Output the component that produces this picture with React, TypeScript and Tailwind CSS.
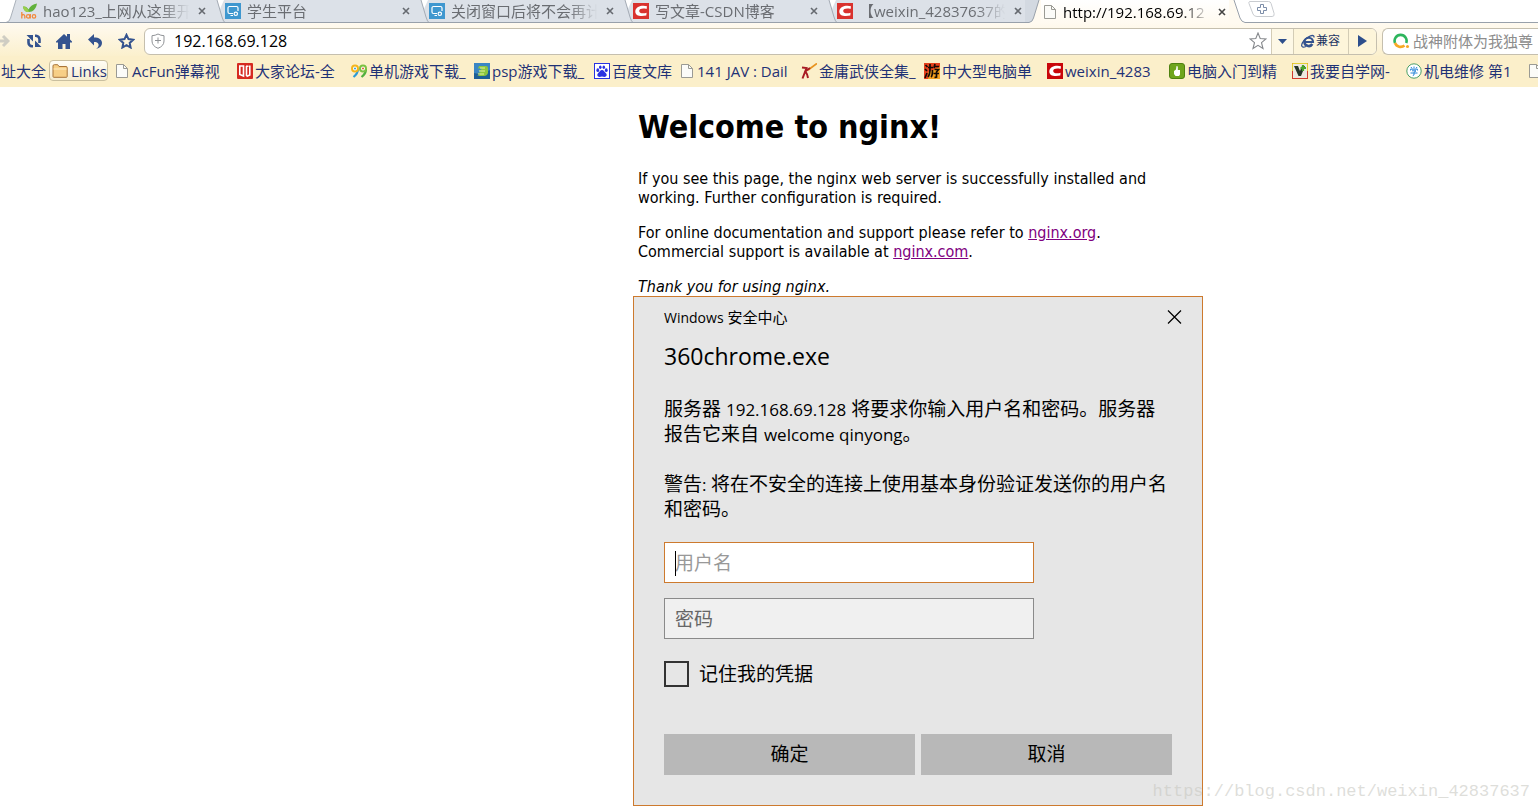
import type { ReactNode } from "react";

function PageIcon() {
  return (
    <svg width="12" height="14" viewBox="0 0 12 14" className="shrink-0">
      <path d="M.5.5h7l4 4v9H.5z" fill="#fbfbf8" stroke="#9a9a94" />
      <path d="M7.500.5v4h4" fill="none" stroke="#9a9a94" />
    </svg>
  );
}

function HaoIcon() {
  return (
    <svg width="16" height="16" viewBox="0 0 16 16" className="shrink-0">
      <path d="M2 3.500c3-.5 4.500 1 5.500 3C9 3 12 1 16 .5c-1 5.500-4 8.500-8 8.500S2.500 7 2 3.500z" fill="#62b23c" />
      <path d="M2 3.500c3 0 5 2 6 5.500-4 0-5.500-2-6-5.500z" fill="#9bcf4a" />
      <g fill="none" stroke="#f28a3c" strokeWidth="1.300">
        <path d="M.8 9v6.500M.8 13c.6-2.200 3-1.800 3 .3v2.200" />
        <circle cx="7.200" cy="13.400" r="1.700" />
        <path d="M9.300 11v4.600" />
        <circle cx="13" cy="13.400" r="1.700" />
      </g>
    </svg>
  );
}

function ScreenIcon() {
  return (
    <svg width="16" height="16" viewBox="0 0 16 16" className="shrink-0">
      <rect width="16" height="16" fill="#3f97cf" />
      <path d="M8 10.500H4.500a1.500 1.500 0 0 1-1.500-1.500V5a1.500 1.500 0 0 1 1.500-1.500h7A1.500 1.500 0 0 1 13 5v3M5.500 12.500h2.500" fill="none" stroke="#fff" strokeWidth="1.200" />
      <circle cx="10.800" cy="10.800" r="1.700" fill="none" stroke="#fff" strokeWidth="1.200" />
    </svg>
  );
}

function CsdnIcon({ color = "#d9322e" }: { color?: string }) {
  return (
    <svg width="16" height="16" viewBox="0 0 16 16" className="shrink-0">
      <rect width="16" height="16" fill={color} />
      <path d="M14 3.200C9.500 1.900 2.800 3 2.300 8c-.4 5 5.300 5.800 11 4.600l.3-2.800c-3 .9-7.600.9-7.400-2 .2-2.600 4.200-2.700 7.400-1.900z" fill="#fff" />
    </svg>
  );
}

type Edge = "first" | "middle" | "active";

function TabEdge({ kind }: { kind: Edge }) {
  return (
    <svg width="16" height="23" viewBox="0 0 16 23" className="shrink-0">
      {kind === "first" && (
        <>
          <path d="M11 0L5.500 18Q4.500 22 1 22.500H16V0z" fill="#dce1e8" />
          <path d="M11 0L5.500 18Q4.500 22 1 22.500" fill="none" stroke="#aab1ba" />
          <path d="M0 22.500h16" stroke="#98a0aa" />
        </>
      )}
      {kind === "middle" && (
        <>
          <rect width="16" height="23" fill="#dce1e8" />
          <path d="M8 0h7l-4 9z" fill="#fff" />
          <path d="M8 0l5 17q1.500 5 3 5.500" fill="none" stroke="#a4abb4" />
          <path d="M0 22.500h16" stroke="#98a0aa" />
        </>
      )}
      {kind === "active" && (
        <>
          <rect width="16" height="23" fill="#d3d9e1" />
          <path d="M14 0L8.500 18Q7.500 22 4 22.500V23h12V0z" fill="#fffaf0" />
          <path d="M14 0L8.500 18Q7.500 22 4 22.500H0" fill="none" stroke="#98a0aa" />
        </>
      )}
    </svg>
  );
}

function Tab({ edge, icon, title }: { edge: Edge; icon: ReactNode; title: string }) {
  const active = edge === "active";
  return (
    <div className="flex h-[23px] w-[204px] shrink-0">
      <TabEdge kind={edge} />
      <div
        className={
          active
            ? "flex grow items-center bg-gradient-to-b from-white to-[#fffaf0]"
            : "flex grow items-center border-b border-[#98a0aa] bg-[#dce1e8]"
        }
      >
        <span className="flex w-[22px] shrink-0">{icon}</span>
        <span
          className={`w-[151px] shrink-0 text-[15px] leading-[22px] whitespace-nowrap [mask-image:linear-gradient(to_right,black_78%,transparent_97%)] ${
            active ? "text-black" : "text-[#6a6d72]"
          }`}
        >
          {title}
        </span>
        <button aria-label="关闭标签页" className="ml-1 flex shrink-0">
          <svg width="8" height="8" viewBox="0 0 8 8">
            <path d="M1 1l6 6M7 1L1 7" stroke={active ? "#444" : "#666a70"} strokeWidth="1.600" />
          </svg>
        </button>
      </div>
    </div>
  );
}

function TabStrip() {
  return (
    <div className="flex h-[23px] overflow-hidden bg-white">
      <div className="w-[5px] shrink-0 border-b border-[#98a0aa]" />
      <Tab edge="first" icon={<HaoIcon />} title="hao123_上网从这里开" />
      <Tab edge="middle" icon={<ScreenIcon />} title="学生平台" />
      <Tab edge="middle" icon={<ScreenIcon />} title="关闭窗口后将不会再计" />
      <Tab edge="middle" icon={<CsdnIcon />} title="写文章-CSDN博客" />
      <Tab edge="middle" icon={<CsdnIcon />} title="【weixin_42837637的" />
      <Tab edge="active" icon={<span className="pl-[3px]"><PageIcon /></span>} title="http://192.168.69.12" />
      <svg width="16" height="23" viewBox="0 0 16 23" className="shrink-0">
        <path d="M0 0h5l6 18q1.500 4 5 4.500v.5H0z" fill="#fffaf0" />
        <path d="M5 0l6 18q1.500 4 5 4.500" fill="none" stroke="#98a0aa" />
      </svg>
      <div className="flex grow items-start border-b border-[#98a0aa] pl-[3px]">
        <button aria-label="新建标签页">
          <svg width="27" height="17" viewBox="0 0 27 17">
            <path d="M1.500 1.500h19q2 0 2.600 2l3 10q.6 3-2 3H9q-3 0-4-2.500L1 3.500q-.4-2 .5-2z" fill="#fff" stroke="#c9ccd0" />
            <path d="M12.500 4.500h3v3h3v3h-3v3h-3v-3h-3v-3h3z" fill="#fff" stroke="#7c8da8" />
          </svg>
        </button>
      </div>
    </div>
  );
}

function Toolbar() {
  return (
    <div className="flex h-[33px] items-center overflow-hidden bg-gradient-to-b from-[#fffaf0] to-[#fbf0cd] pt-[3px]">
      <button aria-label="前进" className="flex w-[26px] shrink-0">
        <svg width="10" height="14" viewBox="0 0 10 14">
          <path d="M0 7h8M3 2l5 5-5 5" fill="none" stroke="#cfcdc3" strokeWidth="3" />
        </svg>
      </button>
      <button aria-label="刷新" className="flex w-[30px] shrink-0">
        <svg width="16" height="14" viewBox="0 0 16 14">
          <path d="M7 12.300H6A3.700 3.700 0 0 1 2.500 8.500V5M9 1.700h1a3.700 3.700 0 0 1 3.500 3.800V9" fill="none" stroke="#34538f" strokeWidth="2.600" />
          <path d="M.5 1H7v6.500zM15.500 13H9V6.500z" fill="#34538f" />
        </svg>
      </button>
      <button aria-label="主页" className="flex w-[32px] shrink-0">
        <svg width="16" height="15" viewBox="0 0 16 15">
          <path d="M8 0l3 2.800V0h3v5.500L16 7.500v1h-2V15H9.500v-5h-3v5H2V8.500H0v-1z" fill="#34538f" />
        </svg>
      </button>
      <button aria-label="后退" className="flex w-[30px] shrink-0">
        <svg width="16" height="15" viewBox="0 0 16 15">
          <path d="M0 5.500L6 0v3.500c5 0 8 2 8 5.500 0 3-2 5-6 6 2-1.500 3-3 2.500-4.800C10 8.500 8.500 8 6 8v3.500z" fill="#34538f" />
        </svg>
      </button>
      <button aria-label="收藏夹" className="flex w-[26px] shrink-0">
        <svg width="17" height="16" viewBox="0 0 17 16">
          <path d="M8.500 1.800l2 4.300 4.700.6-3.500 3.200.9 4.600-4.100-2.300-4.100 2.300.9-4.600L1.800 6.700l4.700-.6z" fill="none" stroke="#34538f" strokeWidth="2" />
        </svg>
      </button>
      <div className="flex h-[27px] min-w-0 grow items-stretch overflow-hidden rounded-md border border-[#c5bfae] bg-white">
        <svg width="14" height="16" viewBox="0 0 14 16" className="ml-[6px] shrink-0 self-center">
          <path d="M7 1q2.500 1.500 6 1.700V8q0 5-6 7.300Q1 13 1 8V2.700Q4.500 2.500 7 1z" fill="none" stroke="#8f9296" />
          <path d="M7 4.500v6M4 7.500h6" stroke="#8f9296" />
        </svg>
        <input
          aria-label="地址"
          defaultValue="192.168.69.128"
          className="min-w-0 grow bg-transparent pl-[9px] text-[16px] leading-[24px] text-black outline-none"
        />
        <button aria-label="收藏此页" className="flex w-[26px] shrink-0 items-center justify-center">
          <svg width="18" height="18" viewBox="0 0 18 18">
            <path d="M9 1l2.200 5.500 5.800.4-4.500 3.800 1.500 5.800-5-3.200-5 3.200 1.500-5.800L1 6.900l5.800-.4z" fill="#fff" stroke="#85888c" strokeWidth="1.100" />
          </svg>
        </button>
        <button aria-label="地址列表" className="flex w-[22px] shrink-0 items-center justify-center border-l border-[#d3ccb5] bg-[#fdf8e6]">
          <svg width="9" height="5" viewBox="0 0 9 5"><path d="M0 0h9L4.500 5z" fill="#2d4f8c" /></svg>
        </button>
        <button className="flex w-[55px] shrink-0 items-center gap-px border-l border-[#d3ccb5] bg-[#fdf5da] pl-[7px] text-[12px] leading-4 text-[#1d3564]">
          <svg width="14" height="14" viewBox="0 0 14 14">
            <path d="M3.500 8A4 4 0 0 1 12 8H4" fill="none" stroke="#34538f" strokeWidth="2.200" />
            <path d="M3.500 7.500a4.200 4.200 0 0 0 7.800 2.500" fill="none" stroke="#34538f" strokeWidth="2.600" />
            <path d="M13 3.500C13.500-.5 6.500 2 3 6.500-.5 11-.2 14.500 5 12.500" fill="none" stroke="#34538f" strokeWidth="1.300" />
          </svg>
          兼容
        </button>
        <button aria-label="转到" className="flex w-[28px] shrink-0 items-center justify-center border-l border-[#d3ccb5] bg-[#fdf5da]">
          <svg width="9" height="12" viewBox="0 0 9 12"><path d="M0 0l9 6-9 6z" fill="#2d4f8c" /></svg>
        </button>
      </div>
      <div className="ml-[5px] flex h-[27px] w-[156px] shrink-0 items-center overflow-hidden rounded-l-md border border-r-0 border-[#c5bfae] bg-white pl-[10px]">
        <svg width="17" height="16" viewBox="0 0 17 16" className="shrink-0">
          <path d="M2 10A6 6 0 1 1 13.200 10" fill="none" stroke="#2db55d" strokeWidth="2.600" />
          <path d="M2 10a6 6 0 0 0 9.500 2.400" fill="none" stroke="#f7a823" strokeWidth="2.600" />
          <circle cx="14.500" cy="13.500" r="1.500" fill="#f7a823" />
        </svg>
        <input
          aria-label="搜索"
          placeholder="战神附体为我独尊"
          className="ml-[3px] w-[124px] shrink-0 bg-transparent text-[15px] leading-5 outline-none placeholder:text-[#8d8d8d]"
        />
      </div>
    </div>
  );
}

function Favicon({ children }: { children: ReactNode }) {
  return (
    <svg width="16" height="16" viewBox="0 0 16 16" className="shrink-0">
      {children}
    </svg>
  );
}

const bookmarks: { label: string; width: string; icon: ReactNode }[] = [
  { label: "AcFun弹幕视", width: "w-[121px]", icon: <span className="w-[14px] shrink-0"><PageIcon /></span> },
  {
    label: "大家论坛-全",
    width: "w-[114px]",
    icon: (
      <Favicon>
        <rect width="16" height="16" rx="1" fill="#d62a20" />
        <path d="M2.800 3h3.700v10l-3.700-1.500z" fill="none" stroke="#fff" strokeWidth="1.600" />
        <path d="M9.500 13V3M9 3.300h2.500M12.800 2.500v9.500L9.500 13.500" fill="none" stroke="#fff" strokeWidth="1.600" />
      </Favicon>
    ),
  },
  {
    label: "单机游戏下载_",
    width: "w-[123px]",
    icon: (
      <Favicon>
        <path d="M7 6c0 4-2 6-4.500 8" fill="none" stroke="#2a9bd8" strokeWidth="2.200" />
        <circle cx="4" cy="5.500" r="3" fill="#fff" stroke="#f3b51d" strokeWidth="2" />
        <path d="M15 6c0 4-2 6-4.500 8" fill="none" stroke="#4faf3d" strokeWidth="2.200" />
        <circle cx="12" cy="5.500" r="3" fill="#fff" stroke="#7cc142" strokeWidth="2" />
        <circle cx="4" cy="5.500" r="1" fill="#2a9bd8" />
        <circle cx="12" cy="5.500" r="1" fill="#e05a2a" />
      </Favicon>
    ),
  },
  {
    label: "psp游戏下载_",
    width: "w-[120px]",
    icon: (
      <Favicon>
        <rect width="16" height="16" fill="#3a86c4" />
        <path d="M0 10q8 2 16-3v9H0z" fill="#1d5f96" />
        <path d="M5 3h7q2 0 2 2v5q-1 3-4 3H3q3-1 3-2.500H3q3-1 4-2.500H4q3-1 4-2.500H4z" fill="#8cc63f" />
        <path d="M6 5h5M5 8h6M4 11h6" stroke="#e5f3a0" />
      </Favicon>
    ),
  },
  {
    label: "百度文库",
    width: "w-[87px]",
    icon: (
      <Favicon>
        <rect x=".5" y=".5" width="15" height="15" fill="#fff" stroke="#2932e1" />
        <g fill="#2932e1">
          <ellipse cx="3.800" cy="7.200" rx="1.400" ry="1.900" />
          <ellipse cx="6.300" cy="4.200" rx="1.300" ry="1.800" />
          <ellipse cx="9.800" cy="4.200" rx="1.300" ry="1.800" />
          <ellipse cx="12.300" cy="7.200" rx="1.400" ry="1.900" />
          <path d="M8 7c1.800 0 2.500 2 4 3.300 1.500 1.700.3 3.700-1.500 3.700-1 0-1.500-.4-2.500-.4s-1.500.4-2.500.4C3.700 14 2.500 12 4 10.300 5.500 9 6.200 7 8 7z" />
        </g>
      </Favicon>
    ),
  },
  { label: "141 JAV : Dail", width: "w-[120px]", icon: <span className="w-[14px] shrink-0"><PageIcon /></span> },
  {
    label: "金庸武侠全集_",
    width: "w-[123px]",
    icon: (
      <Favicon>
        <path d="M16 .5L7 7" stroke="#e8921f" strokeWidth="1.800" />
        <path d="M1 4.500l4.500.5L1.500 15.500M3.500 9L9 5M4.500 8.500C6 10.500 6.500 12 7 15" fill="none" stroke="#a81c24" strokeWidth="2" />
      </Favicon>
    ),
  },
  {
    label: "中大型电脑单",
    width: "w-[123px]",
    icon: (
      <Favicon>
        <rect width="16" height="16" fill="#f3a01f" />
        <path d="M0 0h16v4L4 9v7H0z" fill="#e5401c" />
        <path d="M1.500 2l2 2M1 6l2 2M3 10l-2 5M6 1v3M4 4.500h5M6 5c0 5-.5 7-2 9M8.500 7c0 4 0 6-1.500 7M11 1l-1 4M10 3.500h5M10.500 6.500h4L12.500 9v5l-2 .5M9.500 10.500H15" fill="none" stroke="#130a05" strokeWidth="1.700" />
      </Favicon>
    ),
  },
  { label: "weixin_4283", width: "w-[122px]", icon: <CsdnIcon color="#c9060a" /> },
  {
    label: "电脑入门到精",
    width: "w-[123px]",
    icon: (
      <Favicon>
        <rect x=".5" y=".5" width="15" height="15" rx="2.500" fill="#6fa51c" stroke="#4f8210" />
        <path d="M7.500 3l1.300.6V7H11v4.500L10 13H6.500L5 11V8l2-1.500z" fill="#fff" />
      </Favicon>
    ),
  },
  {
    label: "我要自学网-",
    width: "w-[114px]",
    icon: (
      <Favicon>
        <rect x=".5" y=".5" width="15" height="15" fill="#eee9df" stroke="#d23b2e" />
        <path d="M.5 8V.5h15V8" fill="none" stroke="#e5cf35" />
        <path d="M2 3h4l2 5 2-5h3l-4 10H6.500z" fill="#26362a" />
        <path d="M11 2v6M8.500 5H14" stroke="#49a52c" strokeWidth="2.200" />
      </Favicon>
    ),
  },
  {
    label: "机电维修 第1",
    width: "w-[123px]",
    icon: (
      <Favicon>
        <circle cx="8" cy="8" r="7.200" fill="#fff" stroke="#4b9f68" />
        <path d="M5 4l1 1.500M8 3.500v2M11 4l-1 1.500M4.500 7.500V6.200h7v1.300M6 7.800h4L8 9.300V12l-1.200.5M4.500 10h7" fill="none" stroke="#2784d8" />
      </Favicon>
    ),
  },
];

function BookmarkBar() {
  return (
    <nav className="flex h-[31px] items-center overflow-hidden bg-[#fbefca] pb-[2px] text-[15px] leading-5 whitespace-nowrap text-[#1f3276]">
      <a href="#sites" className="w-[49px] shrink-0 pl-px">址大全</a>
      <button className="mr-2 flex h-[21px] w-[59px] shrink-0 items-center gap-[3px] rounded-sm border border-[#c9bf9f] bg-gradient-to-b from-[#fffdf5] to-[#f5ecd0] pl-[2px]">
        <svg width="16" height="14" viewBox="0 0 16 14" className="shrink-0">
          <path d="M1 12.500V2q0-1.300 1.300-1.300h3.400L7 2.500h7q1.200 0 1.200 1.200v8.800q0 .8-.8.8H1.800q-.8 0-.8-.8z" fill="#f7cf86" stroke="#a8743a" />
          <path d="M1.500 5h13" stroke="#fdebc2" />
        </svg>
        Links
      </button>
      {bookmarks.map((b) => (
        <a key={b.label} href="#bookmark" className={`flex shrink-0 items-center gap-[2px] ${b.width}`}>
          {b.icon}
          <span>{b.label}</span>
        </a>
      ))}
      <PageIcon />
    </nav>
  );
}

function NginxPage() {
  return (
    <main className="ml-[638px] max-w-[560px] pt-[21px] font-['DejaVu_Sans_Condensed','Noto_Sans',sans-serif] text-[16px] leading-[19px] text-black">
      <h1 className="text-[32px] leading-[39px] font-bold">Welcome to nginx!</h1>
      <p className="mt-[22px]">
        If you see this page, the nginx web server is successfully installed and
        <br />
        working. Further configuration is required.
      </p>
      <p className="mt-4">
        For online documentation and support please refer to{" "}
        <a href="http://nginx.org/" className="text-[#800080] underline">nginx.org</a>.
        <br />
        Commercial support is available at{" "}
        <a href="http://nginx.com/" className="text-[#800080] underline">nginx.com</a>.
      </p>
      <p className="mt-4 italic">Thank you for using nginx.</p>
    </main>
  );
}

function Latin({ children }: { children: ReactNode }) {
  return <span className="text-[17px]">{children}</span>;
}

function CredentialDialog() {
  return (
    <form
      role="dialog"
      aria-label="Windows 安全中心"
      className="absolute top-[296px] left-[633px] w-[570px] border border-[#cd7a2e] bg-[#e6e6e6] px-[30px] pb-[30px] text-[19px] leading-[25px] text-black"
    >
      <div className="flex h-10 items-center justify-between text-[15px] leading-5">
        <span>
          <span className="text-[14px]">Windows</span> 安全中心
        </span>
        <button type="button" aria-label="关闭" className="mr-[-10px] flex">
          <svg width="15" height="14" viewBox="0 0 15 14">
            <path d="M1 .5l13 13M14 .5l-13 13" stroke="#000" strokeWidth="1.200" />
          </svg>
        </button>
      </div>
      <h2 className="h-[38px] text-[23px] leading-[38px]">360chrome.exe</h2>
      <p className="mt-[22px]">
        服务器 <Latin>192.168.69.128</Latin> 将要求你输入用户名和密码。服务器
        <br />
        报告它来自 <Latin>welcome qinyong</Latin>。
      </p>
      <p className="mt-[25px]">
        警告<Latin>: </Latin>将在不安全的连接上使用基本身份验证发送你的用户名
        <br />
        和密码。
      </p>
      <div className="relative mt-5 w-[370px] border border-[#cd7a2e] bg-white">
        <input
          aria-label="用户名"
          placeholder="用户名"
          className="block h-[39px] w-full bg-transparent px-[10px] outline-none placeholder:text-[#999]"
        />
        <span className="absolute top-[8px] left-[10px] h-[25px] w-px bg-black" />
      </div>
      <input
        type="password"
        aria-label="密码"
        placeholder="密码"
        className="mt-[15px] block h-[41px] w-[370px] border border-[#8a8a8a] bg-[#f0f0f0] px-[10px] outline-none placeholder:text-[#666]"
      />
      <label className="mt-[22px] flex h-[26px] items-center gap-[10px]">
        <input type="checkbox" className="h-[26px] w-[25px] appearance-none border-2 border-[#333] bg-[#e6e6e6]" />
        记住我的凭据
      </label>
      <div className="mt-[47px] grid grid-cols-2 gap-[6px]">
        <button type="button" className="h-[41px] bg-[#b8b8b8]">确定</button>
        <button type="button" className="h-[41px] bg-[#b8b8b8]">取消</button>
      </div>
    </form>
  );
}

export default function App() {
  return (
    <div className="relative min-h-screen overflow-hidden bg-white font-['Open_Sans','Noto_Sans_CJK_SC',sans-serif]">
      <TabStrip />
      <Toolbar />
      <BookmarkBar />
      <NginxPage />
      <CredentialDialog />
      <div className="absolute right-[8px] bottom-[8px] font-['Liberation_Mono','Noto_Sans_CJK_SC',monospace] text-[17px] leading-6 text-[#c8c8c2]/60">
        https://blog.csdn.net/weixin_42837637
      </div>
    </div>
  );
}
